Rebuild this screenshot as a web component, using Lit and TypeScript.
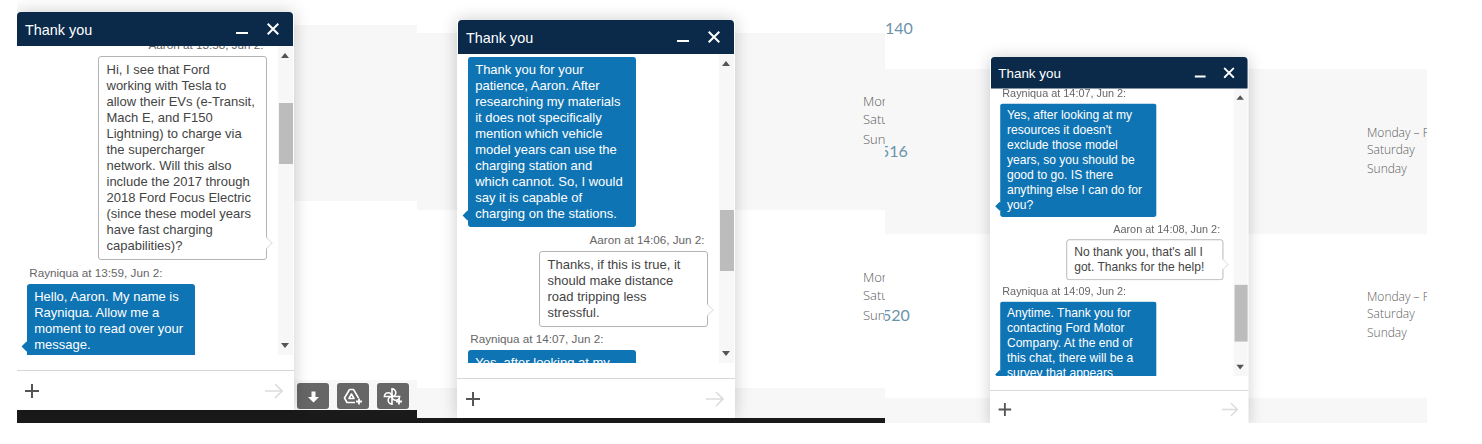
// app.ts
// Three stitched screenshots of the same support chat, each over a page backdrop

import { LitElement, html, css, nothing } from "lit";
import { customElement, property } from "lit/decorators.js";

type Message = { from: "agent" | "user"; meta?: string; text: string };

type Thread = {
  offset: number; // scroll position of the list, relative to the top of the viewport
  thumb: number; // top of the scrollbar thumb
  messages: Message[];
};

type Row = {
  height: number;
  shade?: "grey" | "black";
  column?: number;
  num?: { text: string; top: number; left: number };
  hours?: { top: number; large?: boolean };
  tools?: boolean;
};

type Shot = {
  width: number;
  windowClass: string;
  rows: Row[];
  thread: Thread;
};

const yesMessage =
  "Yes, after looking at my resources it doesn't exclude those model years, so you should be good to go. IS there anything else I can do for you?";

const shots: Shot[] = [
  {
    width: 400,
    windowClass: "first",
    rows: [
      { height: 25 },
      { height: 176, shade: "grey" },
      { height: 179 },
      { height: 30, shade: "grey", tools: true },
      { height: 13, shade: "black" },
    ],
    thread: {
      offset: -9,
      thumb: 57,
      messages: [
        {
          from: "user",
          meta: "Aaron at 13:58, Jun 2:",
          text: "Hi, I see that Ford working with Tesla to allow their EVs (e-Transit, Mach E, and F150 Lightning) to charge via the supercharger network. Will this also include the 2017 through 2018 Ford Focus Electric (since these model years have fast charging capabilities)?",
        },
        {
          from: "agent",
          meta: "Rayniqua at 13:59, Jun 2:",
          text: "Hello, Aaron. My name is Rayniqua. Allow me a moment to read over your message.",
        },
      ],
    },
  },
  {
    width: 468,
    windowClass: "second",
    rows: [
      { height: 33 },
      { height: 177, shade: "grey", column: 446, hours: { top: 60, large: true } },
      { height: 178, column: 446, hours: { top: 59, large: true } },
      { height: 30, shade: "grey" },
      { height: 5, shade: "black" },
    ],
    thread: {
      offset: 3,
      thumb: 156,
      messages: [
        {
          from: "agent",
          text: "Thank you for your patience, Aaron. After researching my materials it does not specifically mention which vehicle model years can use the charging station and which cannot. So, I would say it is capable of charging on the stations.",
        },
        {
          from: "user",
          meta: "Aaron at 14:06, Jun 2:",
          text: "Thanks, if this is true, it should make distance road tripping less stressful.",
        },
        { from: "agent", meta: "Rayniqua at 14:07, Jun 2:", text: yesMessage },
      ],
    },
  },
  {
    width: 542,
    windowClass: "third",
    rows: [
      { height: 69, column: 482, num: { text: "140", top: 18, left: 0 } },
      {
        height: 165,
        shade: "grey",
        column: 482,
        num: { text: "516", top: 72, left: -5 },
        hours: { top: 55 },
      },
      {
        height: 164,
        column: 482,
        num: { text: "520", top: 71, left: -3 },
        hours: { top: 54 },
      },
      { height: 25, shade: "grey" },
    ],
    thread: {
      offset: -3,
      thumb: 211,
      messages: [
        { from: "agent", meta: "Rayniqua at 14:07, Jun 2:", text: yesMessage },
        {
          from: "user",
          meta: "Aaron at 14:08, Jun 2:",
          text: "No thank you, that's all I got. Thanks for the help!",
        },
        {
          from: "agent",
          meta: "Rayniqua at 14:09, Jun 2:",
          text: "Anytime. Thank you for contacting Ford Motor Company. At the end of this chat, there will be a survey that appears",
        },
      ],
    },
  },
];

@customElement("chat-window")
export class ChatWindow extends LitElement {
  @property({ attribute: false }) thread!: Thread;

  static styles = css`
    :host {
      display: flex;
      flex-direction: column;
      width: 278px;
      height: 398px;
      background: #fff;
      box-shadow: 0 0 16px rgba(0, 0, 0, 0.2);
      font-family: "Liberation Sans", Arial, sans-serif;
    }

    .header {
      position: relative;
      z-index: 1;
      display: flex;
      align-items: center;
      flex: none;
      height: 34px;
      margin: 0 1px;
      padding: 0 14px 0 8px;
      background: #0b2a4a;
      border-radius: 4px 4px 0 0;
      color: #fff;
      font-size: 14.4px;
    }

    .title {
      flex: 1;
      padding-top: 1px;
    }

    .header svg {
      display: block;
    }

    .minimize {
      margin-right: 19px;
    }

    .viewport {
      display: flex;
      flex: none;
      height: 309px;
    }

    .clip {
      flex: 1;
      min-width: 0;
      overflow: hidden;
    }

    .list {
      display: flex;
      flex-direction: column;
      gap: 4.5px;
      padding: 0 11px 0 10.7px;
    }

    .message {
      display: flex;
      flex-direction: column;
    }

    .message.user {
      align-items: flex-end;
    }

    .meta {
      margin-bottom: 3px;
      padding: 0 3px 0 2.5px;
      color: #666;
      font-size: 11.7px;
      line-height: 16px;
    }

    .bubble {
      position: relative;
      box-sizing: border-box;
      padding: 5px 8px;
      font-size: 13px;
      line-height: 16px;
      border-radius: 3px;
    }

    .agent .bubble {
      width: 168px;
      padding-left: 7.5px;
      background: #0f74b4;
      color: #fff;
    }

    .user .bubble {
      width: 169px;
      background: #fff;
      border: 1px solid #b4b4b4;
      color: #444;
    }

    .bubble::after {
      content: "";
      position: absolute;
      width: 7px;
      height: 7px;
      transform: rotate(45deg);
    }

    .agent .bubble::after {
      left: -4px;
      bottom: 8px;
      background: #0f74b4;
    }

    .user .bubble::after {
      right: -5px;
      bottom: 12px;
      background: #fff;
      border-top: 1px solid #e2e2e2;
      border-right: 1px solid #e2e2e2;
    }

    .scrollbar {
      position: relative;
      flex: none;
      width: 15px;
      margin-right: 1.5px;
      background: #f7f7f7;
    }

    .thumb {
      position: absolute;
      left: 1px;
      right: 0;
      height: 61px;
      background: #bcbcbc;
    }

    .arrow {
      position: absolute;
      left: 3.5px;
      width: 0;
      height: 0;
      border-left: 4px solid transparent;
      border-right: 4px solid transparent;
    }

    .arrow.up {
      top: 7px;
      border-bottom: 5px solid #555;
    }

    .arrow.down {
      bottom: 7px;
      border-top: 5px solid #555;
    }

    .footer {
      display: flex;
      align-items: center;
      justify-content: space-between;
      box-sizing: border-box;
      flex: none;
      height: 40px;
      margin-top: 15px;
      padding: 0 11px 0 9px;
      border-top: 1px solid #d6d6d6;
    }
  `;

  private renderMessage(m: Message) {
    return html`
      <div class="message ${m.from}">
        ${m.meta ? html`<div class="meta">${m.meta}</div>` : nothing}
        <div class="bubble">${m.text}</div>
      </div>
    `;
  }

  render() {
    const { offset, thumb, messages } = this.thread;
    return html`
      <div class="header">
        <span class="title">Thank you</span>
        <svg class="minimize" width="12" height="12" viewBox="0 0 12 12">
          <path d="M0 10h12" stroke="#fff" stroke-width="2" />
        </svg>
        <svg width="12" height="12" viewBox="0 0 12 12">
          <path d="M.7.7l10.6 10.6M11.3.7L.7 11.3" stroke="#fff" stroke-width="2" fill="none" />
        </svg>
      </div>
      <div class="viewport">
        <div class="clip">
          <div class="list" style="margin-top:${offset}px">
            ${messages.map((m) => this.renderMessage(m))}
          </div>
        </div>
        <div class="scrollbar">
          <div class="arrow up"></div>
          <div class="thumb" style="top:${thumb}px"></div>
          <div class="arrow down"></div>
        </div>
      </div>
      <div class="footer">
        <svg width="14" height="14" viewBox="0 0 14 14">
          <path d="M7 0v14M0 7h14" stroke="#555" stroke-width="2" />
        </svg>
        <svg width="18" height="16" viewBox="0 0 18 16">
          <path d="M0 8h17M10 1l7 7-7 7" stroke="#dcdcdc" stroke-width="1.6" fill="none" />
        </svg>
      </div>
    `;
  }
}

@customElement("app-root")
export class AppRoot extends LitElement {
  static styles = css`
    :host {
      display: flex;
      width: 1482px;
      height: 444px;
      padding-left: 17px;
      box-sizing: border-box;
      background: #fff;
      font-family: "Open Sans", "Liberation Sans", sans-serif;
    }

    .shot {
      position: relative;
      flex: none;
      height: 423px;
      overflow: hidden;
    }

    .row {
      display: grid;
      align-items: start;
    }

    .row.grey {
      background: #f7f7f7;
    }

    .row.black {
      background: #1a1a1a;
    }

    .num {
      color: #6c93aa;
      font-family: Lato, sans-serif;
      font-size: 16px;
      line-height: 20px;
    }

    .hours {
      color: #5c5c5c;
      font-size: 12px;
      font-weight: 300;
      line-height: 17px;
      white-space: nowrap;
    }

    .hours div:last-child {
      margin-top: 2px;
    }

    .hours.large {
      font-size: 13px;
      line-height: 17.5px;
    }

    .hours.large div:last-child {
      margin-top: 3px;
    }

    .tools {
      display: flex;
      justify-content: flex-end;
      gap: 8px;
      padding: 3px 8px 0 0;
    }

    .tool {
      display: block;
      width: 32px;
      height: 26px;
      background: #666;
      border-radius: 3px;
    }

    chat-window {
      position: absolute;
    }

    chat-window.first {
      left: -1px;
      top: 12px;
    }

    chat-window.second {
      left: 40px;
      top: 20px;
    }

    chat-window.third {
      left: 105px;
      top: 57px;
      transform: scale(0.93);
      transform-origin: 0 0;
    }
  `;

  private renderTools() {
    return html`
      <div class="tools">
        <svg class="tool" viewBox="0 0 32 26">
          <path d="M14.5 8.5h4v5.5H22l-5.5 5.5L11 14h3.5z" fill="#fff" />
        </svg>
        <svg class="tool" viewBox="0 0 32 26" fill="none" stroke="#fff" stroke-width="1.6">
          <path d="M12.5 6.5h4l5 8.5M12.5 6.5l-5 8.5 2.5 4.5H18" stroke-linejoin="round" />
          <path d="M14.5 11l-2.5 4.5h5z" stroke-linejoin="round" />
          <path d="M22 15.5v6M19 18.5h6" stroke-width="1.8" />
        </svg>
        <svg class="tool" viewBox="0 0 32 26" fill="none" stroke="#fff" stroke-width="1.6">
          <path d="M15 13.5a3.8 3.8 0 0 0 0-7.6z" />
          <path d="M15 13.5a3.8 3.8 0 0 0 7.6 0z" />
          <path d="M15 13.5a3.8 3.8 0 0 0 0 7.6z" />
          <path d="M15 13.5a3.8 3.8 0 0 0-7.6 0z" />
          <path d="M22 15.5v6M19 18.5h6" stroke-width="1.8" />
        </svg>
      </div>
    `;
  }

  private renderRow(row: Row) {
    const columns = row.column ? `${row.column}px auto` : "auto";
    const style = `height:${row.height}px;grid-template-columns:${columns}`;
    return html`
      <div class="row ${row.shade ?? ""}" style=${style}>
        ${row.tools ? this.renderTools() : nothing}
        ${row.column
          ? html`<div
              class="num"
              style="margin:${row.num?.top ?? 0}px 0 0 ${row.num?.left ?? 0}px"
            >
              ${row.num?.text ?? ""}
            </div>`
          : nothing}
        ${row.hours
          ? html`<div
              class="hours ${row.hours.large ? "large" : ""}"
              style="margin-top:${row.hours.top}px"
            >
              <div>Monday – Friday</div>
              <div>Saturday</div>
              <div>Sunday</div>
            </div>`
          : nothing}
      </div>
    `;
  }

  render() {
    return shots.map(
      (shot) => html`
        <section class="shot" style="width:${shot.width}px">
          ${shot.rows.map((row) => this.renderRow(row))}
          <chat-window class=${shot.windowClass} .thread=${shot.thread}></chat-window>
        </section>
      `
    );
  }
}

declare global {
  interface HTMLElementTagNameMap {
    "app-root": AppRoot;
    "chat-window": ChatWindow;
  }
}
